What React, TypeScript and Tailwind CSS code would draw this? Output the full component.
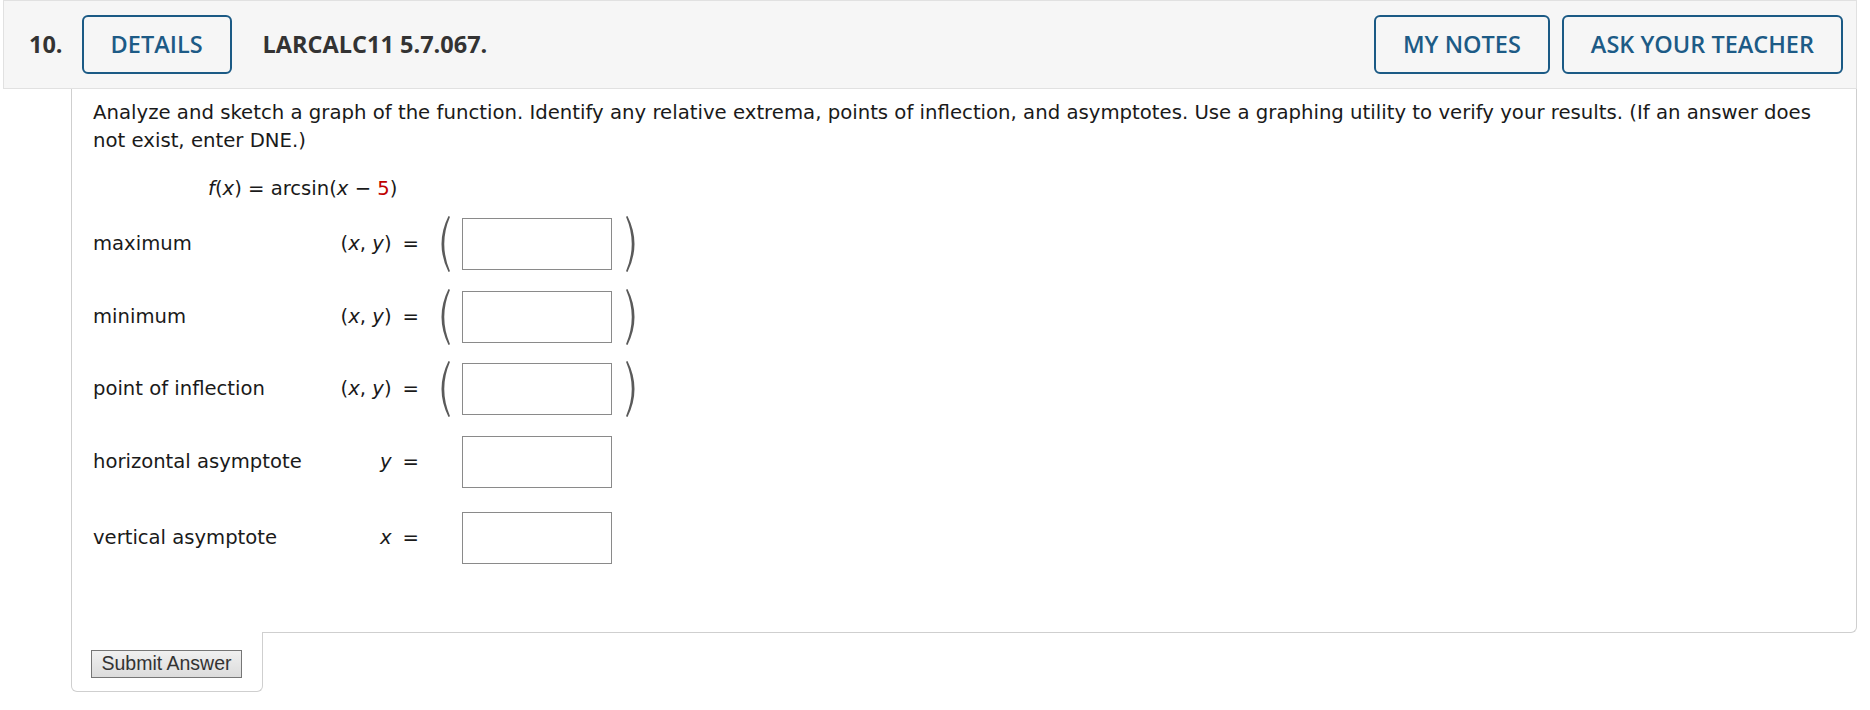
import React from "react"

const body = { fontFamily: '"DejaVu Sans", Verdana, sans-serif' }

function Paren({ flip }: { flip?: boolean }) {
  return (
    <svg width="15" height="58" viewBox="0 0 15 58" className={flip ? "-scale-x-100" : ""}>
      <path d="M12.5 1 Q-1.5 29 12.5 57 L14 56.2 Q2.5 29 14 1.8 Z" fill="#5a5a5a" />
    </svg>
  )
}

function Row({ label, lhs, pair, className }: { label: string; lhs: React.ReactNode; pair?: boolean; className?: string }) {
  return (
    <div className={`flex items-center h-[52px] ${className ?? ""}`}>
      <span className="w-[230px] text-[19.6px] text-[#1a1a1a]">{label}</span>
      <span className="w-[96px] flex justify-end items-center text-[19.6px] text-[#1a1a1a]">
        {lhs}
        <span className="ml-[11px]">=</span>
      </span>
      <span className="ml-[17px] w-[15px] flex">{pair && <Paren />}</span>
      <input className="ml-[11px] w-[150px] h-[52px] border border-[#8a8a8a] bg-white outline-none" />
      <span className="ml-[13px] w-[15px] flex">{pair && <Paren flip />}</span>
    </div>
  )
}

const XY = (
  <span>
    (<i>x</i>, <i>y</i>)
  </span>
)

export default function App() {
  return (
    <div className="w-[1870px] h-[710px] bg-white">
      <div className="ml-[3px] w-[1854px]">
        <div
          className="h-[89px] flex items-center pl-[25px] pr-[13px] bg-[#f6f6f6] border border-[#e1e1e1]"
          style={{ fontFamily: '"Open Sans", sans-serif' }}
        >
          <span className="text-[23.5px] font-bold text-[#333]">10.</span>
          <button className="ml-[19px] h-[59px] px-[27px] rounded-[6px] border-2 border-[#1b5a85] text-[23.5px] font-semibold text-[#1d5b86]">
            DETAILS
          </button>
          <span className="ml-[31px] text-[23.5px] font-bold text-[#333]">LARCALC11 5.7.067.</span>
          <div className="ml-auto flex gap-[12px]">
            <button className="h-[59px] px-[27px] rounded-[6px] border-2 border-[#1b5a85] text-[23.5px] font-semibold text-[#1d5b86]">
              MY NOTES
            </button>
            <button className="h-[59px] px-[27px] rounded-[6px] border-2 border-[#1b5a85] text-[23.5px] font-semibold text-[#1d5b86]">
              ASK YOUR TEACHER
            </button>
          </div>
        </div>

        <div className="ml-[68px]" style={body}>
          <div className="border-x border-b border-[#cfcfcf] rounded-br-[6px] pl-[21px] pt-[10px] pb-[68px]">
            <p className="text-[19.7px] leading-[28px] text-[#1a1a1a]">
              Analyze and sketch a graph of the function. Identify any relative extrema, points of inflection, and asymptotes. Use a graphing utility to verify your results. (If an answer does
              <br />
              not exist, enter DNE.)
            </p>
            <p className="mt-[20px] pl-[115px] text-[19.6px] leading-[28px] text-[#1a1a1a]">
              <i>f</i>(<i>x</i>) = arcsin(<i>x</i> − <span className="text-[#c00000]">5</span>)
            </p>
            <Row className="mt-[15px]" label="maximum" lhs={XY} pair />
            <Row className="mt-[21px]" label="minimum" lhs={XY} pair />
            <Row className="mt-[20px]" label="point of inflection" lhs={XY} pair />
            <Row className="mt-[21px]" label="horizontal asymptote" lhs={<i>y</i>} />
            <Row className="mt-[24px]" label="vertical asymptote" lhs={<i>x</i>} />
          </div>
          <div className="-mt-px w-[192px] bg-white border-x border-b border-[#cfcfcf] rounded-b-[6px] pt-[18px] pb-[13px] pl-[19px]">
            <button
              className="w-[151px] h-[28px] border border-[#767676] bg-gradient-to-b from-[#f0f0f0] to-[#dcdcdc] text-[19.5px] leading-none text-[#333]"
              style={{ fontFamily: '"Liberation Sans", Arial, sans-serif' }}
            >
              Submit Answer
            </button>
          </div>
        </div>
      </div>
    </div>
  )
}
